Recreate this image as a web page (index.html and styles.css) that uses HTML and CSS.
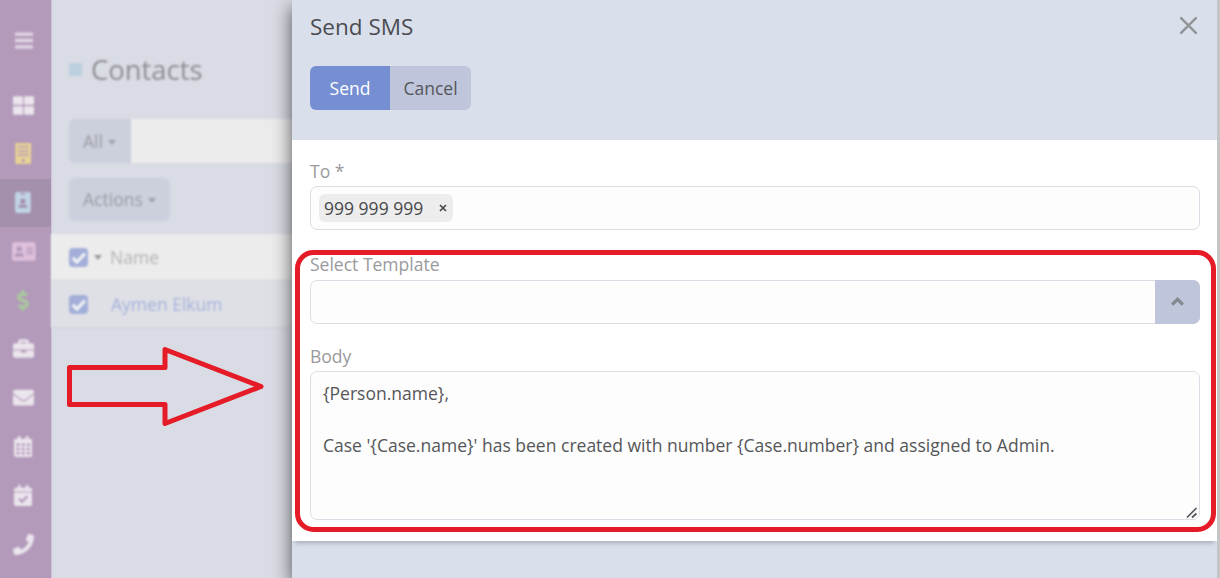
FILE: index.html
```html
<!DOCTYPE html>
<html lang="en">
<head>
<meta charset="utf-8">
<title>Send SMS</title>
<link rel="stylesheet" href="styles.css">
</head>
<body>
<div class="screen">
  <div class="app">
    <nav class="sidebar">
      <div class="nav-item menu"><svg viewBox="0 0 448 512"><path d="M0 60h448v80H0zM0 216h448v80H0zM0 372h448v80H0z"/></svg></div>
      <div class="nav-item grid"><svg viewBox="0 0 512 512"><rect y="32" width="242" height="208" rx="24"/><rect x="270" y="32" width="242" height="208" rx="24"/><rect y="272" width="242" height="208" rx="24"/><rect x="270" y="272" width="242" height="208" rx="24"/></svg></div>
      <div class="nav-item yellow"><svg viewBox="0 0 448 512"><path fill-rule="evenodd" d="M32 0h384v512H32zM108 64v60h56V64zM196 64v60h56V64zM284 64v60h56V64zM108 164v60h56v-60zM196 164v60h56v-60zM284 164v60h56v-60zM108 264v60h56v-60zM196 264v60h56v-60zM284 264v60h56v-60zM190 396v68h68v-68z"/></svg></div>
      <div class="nav-item blue active"><svg viewBox="0 0 384 512"><path fill-rule="evenodd" d="M48 0h288a48 48 0 0 1 48 48v416a48 48 0 0 1-48 48H48a48 48 0 0 1-48-48V48A48 48 0 0 1 48 0zM144 32a16 16 0 0 0 0 32h96a16 16 0 0 0 0-32zM192 160a64 64 0 1 0 0 128 64 64 0 0 0 0-128zM80 384h224v-20c0-32-30-58-67-58-12 0-20 8-45 8s-33-8-45-8c-37 0-67 26-67 58z"/></svg></div>
      <div class="nav-item pink"><svg viewBox="0 0 576 512"><path fill-rule="evenodd" d="M48 32h480a48 48 0 0 1 48 48v352a48 48 0 0 1-48 48H48a48 48 0 0 1-48-48V80a48 48 0 0 1 48-48zM176 128a64 64 0 1 0 0 128 64 64 0 0 0 0-128zM64 384h224v-32c0-32-30-58-67-58-12 0-20 8-45 8s-33-8-45-8c-37 0-67 26-67 58zM352 160v32h160v-32zM352 224v32h160v-32zM352 288v32h160v-32z"/></svg></div>
      <div class="nav-item green"><svg viewBox="0 0 288 512"><path d="M209.2 233.4l-108-31.6C88.7 198.2 80 186.5 80 173.5c0-16.3 13.2-29.5 29.5-29.5h66.3c12.2 0 24.2 3.7 34.2 10.5 6.1 4.1 14.3 3.1 19.5-2l34.8-34c7.1-6.9 6.1-18.4-1.8-24.5C238 74.8 207.4 64.1 176 64V16c0-8.8-7.2-16-16-16h-32c-8.8 0-16 7.2-16 16v48h-2.5C45.8 64-5.4 118.7.5 183.6c4.2 46.1 39.4 83.6 83.8 96.6l102.5 30c12.5 3.7 21.2 15.3 21.2 28.3 0 16.3-13.2 29.5-29.5 29.5h-66.3C100 368 88 364.3 78 357.5c-6.1-4.1-14.3-3.1-19.5 2l-34.8 34c-7.1 6.9-6.1 18.4 1.8 24.5 24.5 19.2 55.1 29.9 86.5 30v48c0 8.8 7.2 16 16 16h32c8.8 0 16-7.2 16-16v-48.2c46.6-.9 90.3-28.6 105.7-72.7 21.5-61.6-14.6-124.8-72.5-141.7z"/></svg></div>
      <div class="nav-item"><svg viewBox="0 0 512 512"><path fill-rule="evenodd" d="M0 280V176a48 48 0 0 1 48-48h80V80a48 48 0 0 1 48-48h160a48 48 0 0 1 48 48v48h80a48 48 0 0 1 48 48v104zM192 96v32h128V96zM0 304h192v32a16 16 0 0 0 16 16h96a16 16 0 0 0 16-16v-32h192v128a48 48 0 0 1-48 48H48a48 48 0 0 1-48-48z"/></svg></div>
      <div class="nav-item"><svg viewBox="0 0 512 512"><path d="M502.3 190.8c3.9-3.1 9.7-.2 9.7 4.7V400c0 26.5-21.5 48-48 48H48c-26.5 0-48-21.5-48-48V195.6c0-5 5.7-7.8 9.7-4.7 22.4 17.4 52.1 39.5 154.1 113.6 21.1 15.4 56.7 47.8 92.2 47.6 35.7.3 72-32.8 92.3-47.6 102-74.1 131.6-96.3 154-113.7zM256 320c23.2.4 56.6-29.2 73.4-41.4 132.7-96.3 142.8-104.7 173.4-128.7 5.8-4.5 9.2-11.5 9.2-18.9v-19c0-26.5-21.5-48-48-48H48c-26.5 0-48 21.5-48 48v19c0 7.4 3.4 14.3 9.2 18.9 30.6 23.9 40.7 32.4 173.4 128.7 16.8 12.2 50.2 41.8 73.4 41.4z"/></svg></div>
      <div class="nav-item"><svg viewBox="0 0 448 512"><path fill-rule="evenodd" d="M0 112a48 48 0 0 1 48-48h48V12a12 12 0 0 1 12-12h40a12 12 0 0 1 12 12v52h128V12a12 12 0 0 1 12-12h40a12 12 0 0 1 12 12v52h48a48 48 0 0 1 48 48v352a48 48 0 0 1-48 48H48a48 48 0 0 1-48-48zM60 184v60h76v-60zM186 184v60h76v-60zM312 184v60h76v-60zM60 288v60h76v-60zM186 288v60h76v-60zM312 288v60h76v-60zM60 392v60h76v-60zM186 392v60h76v-60zM312 392v60h76v-60z"/></svg></div>
      <div class="nav-item"><svg viewBox="0 0 448 512"><path fill-rule="evenodd" d="M0 160v-48a48 48 0 0 1 48-48h48V12a12 12 0 0 1 12-12h40a12 12 0 0 1 12 12v52h128V12a12 12 0 0 1 12-12h40a12 12 0 0 1 12 12v52h48a48 48 0 0 1 48 48v48zM0 184h448v280a48 48 0 0 1-48 48H48a48 48 0 0 1-48-48zM104 350l92 92 150-150-36-36-114 112-56-54z"/></svg></div>
      <div class="nav-item"><svg viewBox="0 0 512 512"><path d="M493.4 24.6l-104-24c-11.3-2.6-22.9 3.3-27.5 13.9l-48 112c-4.2 9.8-1.4 21.3 6.9 28l60.6 49.6c-36 76.7-98.9 140.5-177.2 177.2l-49.6-60.6c-6.8-8.3-18.2-11.1-28-6.9l-112 48C3.9 366.5-2 378.1.6 389.4l24 104C27.1 504.2 36.7 512 48 512c256.1 0 464-207.5 464-464 0-11.2-7.7-20.9-18.6-23.4z"/></svg></div>
    </nav>
    <main class="page">
      <h1 class="page-title"><span class="square"></span>Contacts</h1>
      <div class="search"><span class="btn all">All<i class="caret"></i></span><span class="search-input"></span></div>
      <span class="btn actions">Actions<i class="caret"></i></span>
      <div class="row head"><span class="check"><svg viewBox="0 0 18 18"><path d="M3.5 9.3l4 4 7.5-8"/></svg></span><i class="caret dark"></i><span class="cell">Name</span></div>
      <div class="row"><span class="check"><svg viewBox="0 0 18 18"><path d="M3.5 9.3l4 4 7.5-8"/></svg></span><span class="cell link">Aymen Elkum</span></div>
    </main>
  </div>
  <section class="dialog">
    <header class="dialog-head">
      <div class="title-row"><h2 class="title">Send SMS</h2><svg class="close" viewBox="0 0 18 18"><path d="M2 2l14 14M16 2L2 16"/></svg></div>
      <div class="buttons"><span class="button primary">Send</span><span class="button">Cancel</span></div>
    </header>
    <div class="dialog-body">
      <div class="label">To *</div>
      <div class="field recipients"><span class="tag">999 999 999<svg viewBox="0 0 8 8"><path d="M1 1l6 6M7 1L1 7"/></svg></span></div>
      <div class="label template-label">Select Template</div>
      <div class="field select"><span class="toggle"><svg viewBox="0 0 14 10"><path d="M2 8l5-5 5 5"/></svg></span></div>
      <div class="label body-label">Body</div>
      <div class="field message">{Person.name},

Case '{Case.name}' has been created with number {Case.number} and assigned to Admin.<svg class="grip" viewBox="0 0 12 12"><path d="M1 10.500L10.500 1M6 10.500L10.500 6.500"/></svg></div>
    </div>
  </section>
  <div class="edge"></div>
  <svg class="marks" viewBox="0 0 1220 578"><rect x="297.500" y="252.500" width="916" height="277" rx="16"/><path d="M69.500 367.500H165V349.500L261 386.500L165 423.500V404.500H69.500Z"/></svg>
</div>
</body>
</html>
```
FILE: styles.css
```css
* { box-sizing: border-box; }
body { margin: 0; font-family: "Open Sans", sans-serif; font-size: 17.52px; color: #555658; }
.screen { position: relative; display: flex; width: 1220px; height: 578px; overflow: hidden; background: #d9dce4; }
.app { display: flex; flex: 0 0 292px; min-width: 0; height: 578px; }
.sidebar { flex: 0 0 51px; height: 578px; background: #b39abb; color: #ebe5ed; box-shadow: 1px 0 1px #cfc4d8; }
.nav-item { display: flex; align-items: center; justify-content: center; width: 51px; height: 48.8px; padding: 0 5px 1px 0; }
.nav-item svg { height: 21px; fill: currentColor; filter: blur(0.8px); }
.menu { height: 81px; padding: 0 3px 0 0; color: #e2d7e6; }
.grid { padding-bottom: 0; }
.yellow { color: #e8d295; }
.active { background: #a48fac; }
.blue { color: #c0d4e6; }
.pink { color: #dfc0dc; padding-right: 3px; }
.green { color: #a9c99c; }
.page { flex: 0 0 250px; padding-top: 51px; color: #9b9da2; filter: blur(0.8px); }
.page-title { display: flex; align-items: center; height: 36px; margin: 0 0 32px 18px; font-size: 27.4px; font-weight: 400; color: #8d8f93; }
.square { width: 13px; height: 13px; margin-right: 9px; background: #bdd0df; }
.search { display: flex; height: 44px; margin-left: 18px; }
.search-input { flex: 1; background: #ececec; }
.btn { display: flex; align-items: center; gap: 5px; padding: 0 14px; background: #cccfdc; }
.all { width: 62px; border-radius: 6px 0 0 6px; }
.actions { width: 101px; height: 43px; margin: 15px 0 13px 18px; padding-bottom: 1px; border-radius: 6px; }
.caret { margin-top: 3px; border: 4.5px solid transparent; border-top: 5px solid #a0a2a8; border-bottom: 0; }
.dark { margin: 0 0 0 6px; border-top-color: #96989c; }
.row { display: flex; align-items: center; height: 47px; padding-left: 18px; background: #dfe0e6; border-bottom: 1px solid #d1d3da; }
.head { background: #ececec; color: #b4b4b7; }
.check { width: 19px; height: 19px; border-radius: 4px; background: #a3afd8; }
.check svg { display: block; fill: none; stroke: #f4f4f6; stroke-width: 3; }
.head .cell { margin-left: 8px; }
.link { margin-left: 23px; color: #a5b1da; }
.dialog { position: relative; display: flex; flex-direction: column; flex: 0 0 925px; height: 578px; background: #d9e0eb; box-shadow: 0 7px 18px rgba(0, 0, 0, 0.65); }
.dialog-head { height: 140px; padding: 10px 19px 0 18px; }
.title-row { display: flex; justify-content: space-between; height: 56px; }
.title { margin: 0; font-size: 22.5px; line-height: 33px; font-weight: 400; color: #4b4c51; }
.close { width: 19px; height: 19px; margin-top: 6px; fill: none; stroke: #929498; stroke-width: 2.4; stroke-linecap: round; }
.buttons { display: flex; width: 161px; height: 44px; border-radius: 6px; overflow: hidden; }
.button { flex: 1; background: #bfc5db; line-height: 44px; text-align: center; }
.primary { flex: 0 0 80px; background: #758fd2; color: #fff; }
.dialog-body { height: 401px; padding: 19px 17px 0 18px; background: #fff; box-shadow: 0 5px 5px -3px rgba(80, 90, 100, 0.4); }
.label { height: 27px; line-height: 25px; color: #999a9c; }
.field { height: 44px; border: 1px solid #dcdde5; border-radius: 7px; background: #fdfdfd; }
.recipients { padding: 7px 8px; }
.tag { display: flex; align-items: center; justify-content: space-between; width: 134px; height: 28px; padding: 0 6px 0 5px; border-radius: 6px; background: #ededed; color: #48494c; }
.tag svg { width: 8px; height: 8px; fill: none; stroke: #48494c; stroke-width: 1.7; }
.template-label { margin-top: 22px; height: 28px; }
.select { display: flex; justify-content: flex-end; }
.toggle { display: flex; align-items: center; justify-content: center; width: 45px; height: 44px; margin: -1px; padding: 0 1px 1px 0; border-radius: 0 7px 7px 0; background: #bfc5db; }
.toggle svg { width: 15px; height: 11px; fill: none; stroke: #85878e; stroke-width: 3; }
.body-label { margin-top: 20px; }
.message { position: relative; height: 149px; padding: 8px 12px; line-height: 26px; white-space: pre-wrap; }
.grip { position: absolute; right: 1px; bottom: 0; width: 12px; height: 12px; fill: none; stroke: #55565b; stroke-width: 1.7; }
.edge { position: relative; flex: 0 0 3px; height: 578px; background: #c3c5c7; }
.marks { position: absolute; left: 0; top: 0; width: 1220px; height: 578px; fill: none; stroke: #e51c27; stroke-width: 5; stroke-linejoin: round; pointer-events: none; }
```
